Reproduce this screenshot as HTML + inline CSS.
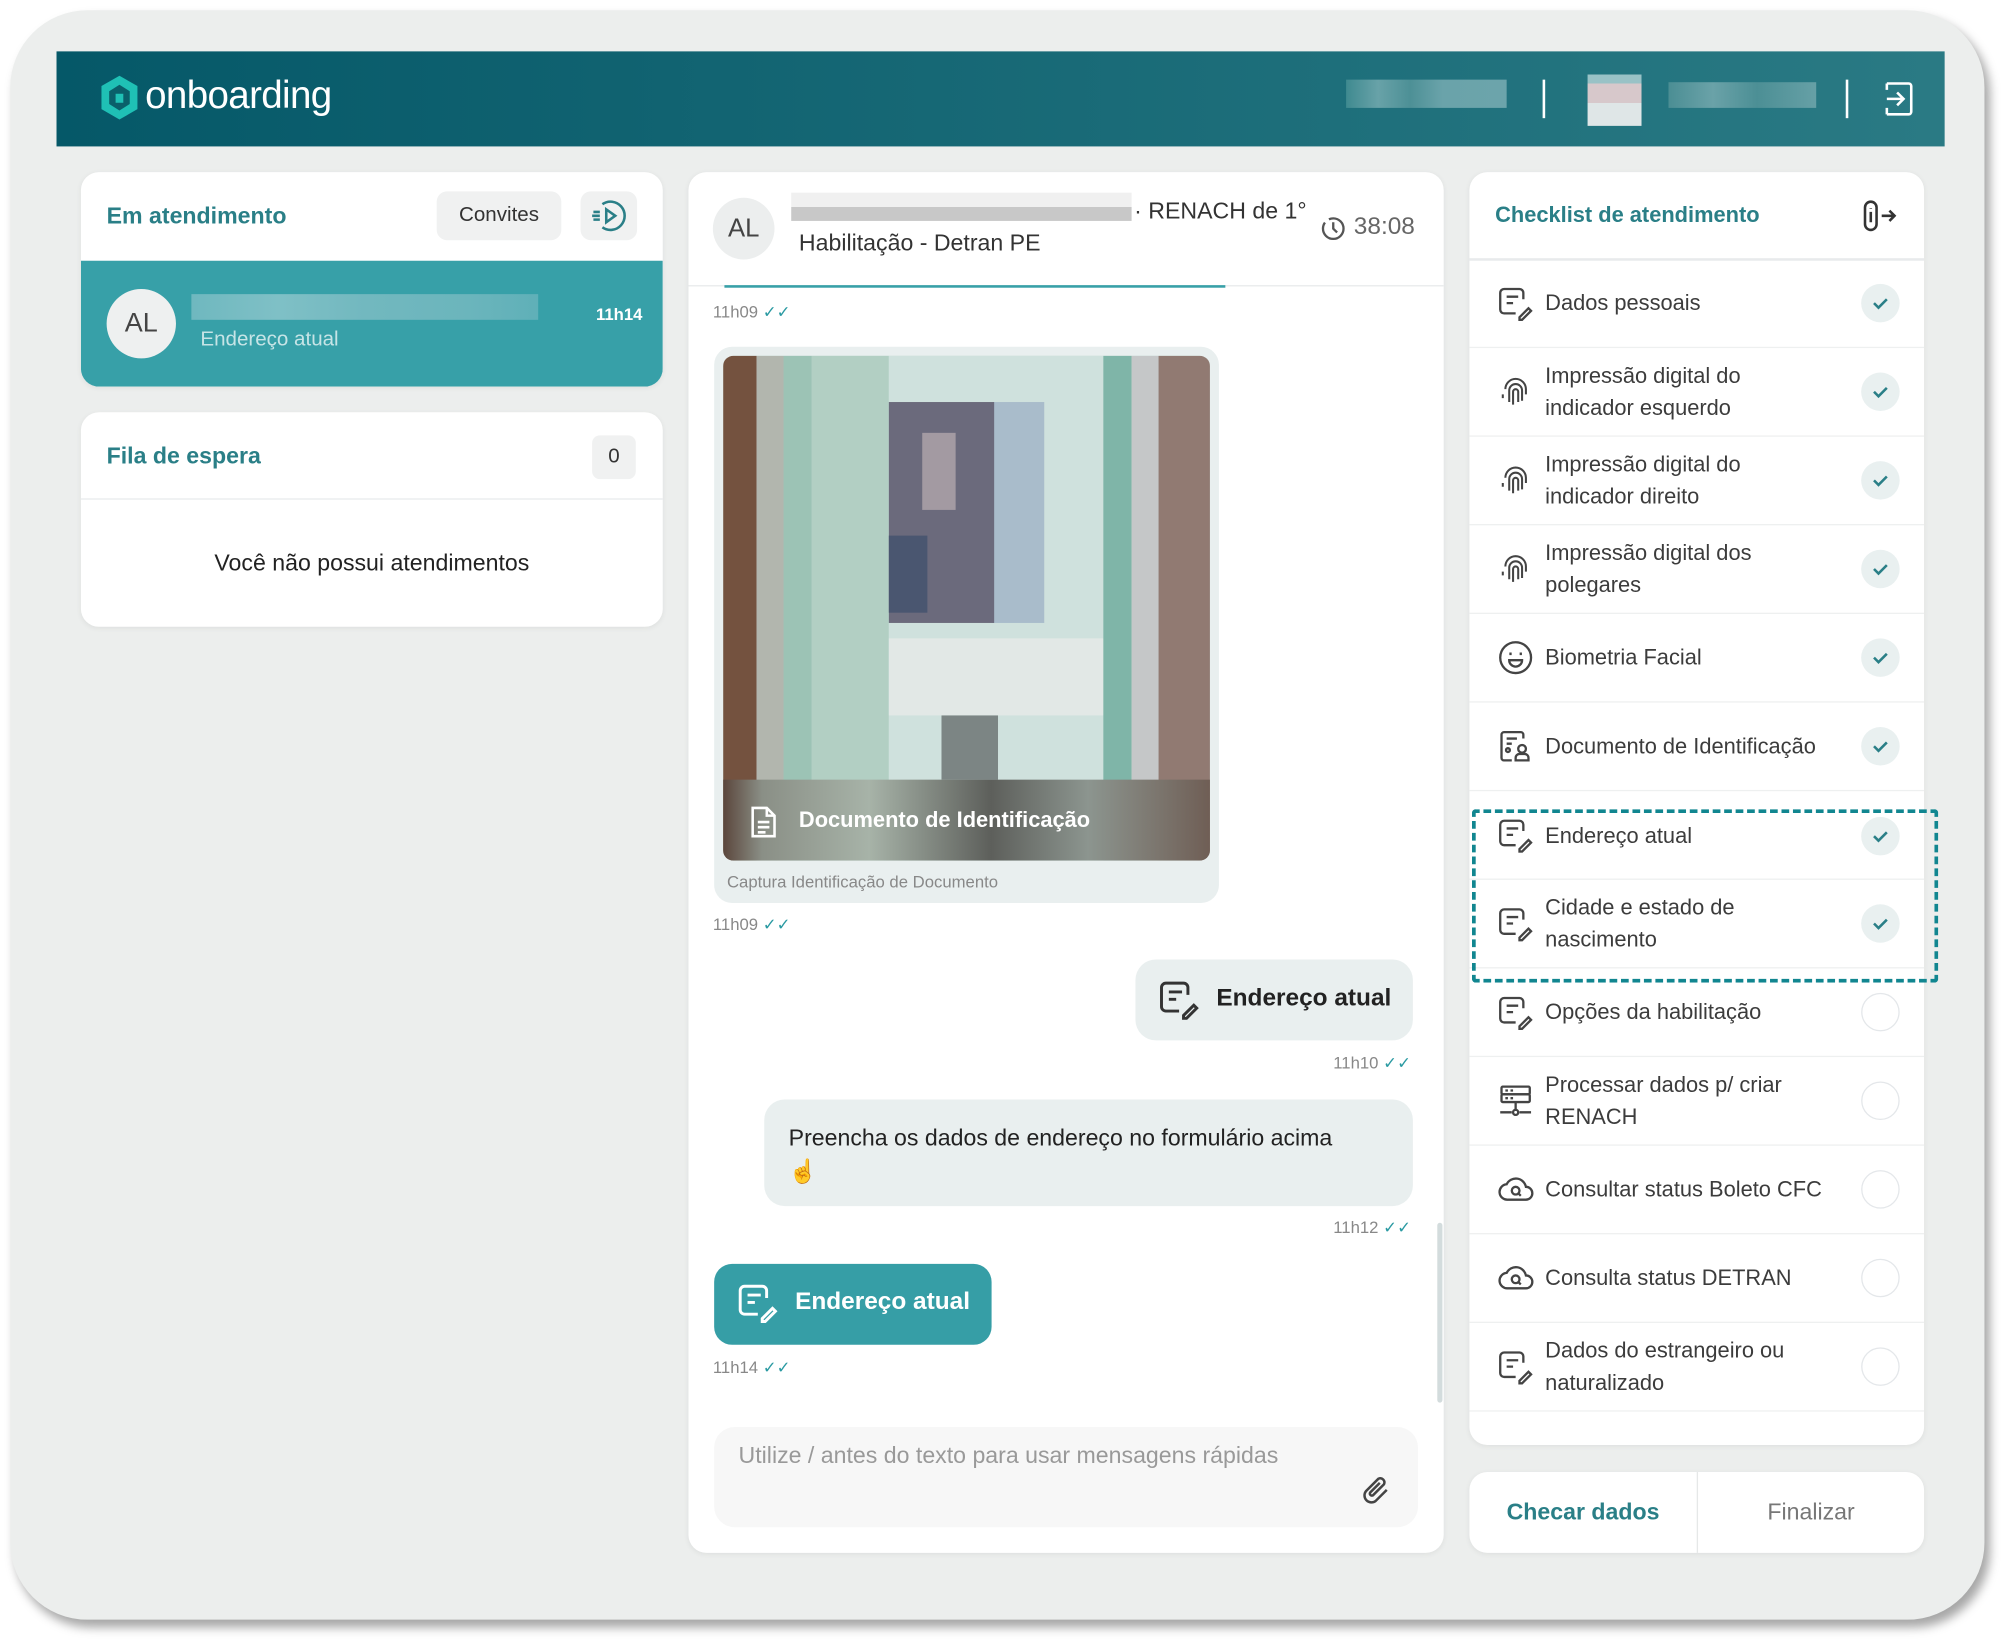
<!DOCTYPE html>
<html><head><meta charset="utf-8">
<style>
*{box-sizing:border-box;margin:0;padding:0}
html,body{width:2014px;height:1648px;overflow:hidden;background:#fff;font-family:"Liberation Sans",sans-serif}
#w{position:absolute;left:0;top:0;width:1568px;height:1283px;transform:scale(1.28444);transform-origin:0 0}
.a{position:absolute}
.frame{left:8px;top:8px;width:1537px;height:1253px;background:#eceeed;border-radius:60px;box-shadow:4px 6px 8px rgba(0,0,0,.35)}
.hdr{left:44px;top:40px;width:1470px;height:74px;background:linear-gradient(90deg,#055868,#2a7a84)}
.card{background:#fff;border-radius:14px;box-shadow:0 1px 4px rgba(0,0,0,.06)}
.t{color:#2a7f87;font-weight:bold;font-size:18px}
.sep{height:1px;background:#e8eaec}
.row{position:absolute;left:0;width:354px;height:69px;border-bottom:1px solid #eef0f0}
.row .ic{position:absolute;left:22px;top:50%;transform:translateY(-50%);width:28px;height:28px}
.row .tx{position:absolute;left:59px;top:50%;transform:translateY(-50%);font-size:17px;color:#3c3c3c;line-height:25px;width:205px}
.row .ck{position:absolute;left:305px;top:50%;transform:translateY(-50%);width:30px;height:30px;border-radius:50%;background:#e9f0f0}
.row .ck.o{background:#fff;border:1.5px solid #e4e7ea}
.time{font-size:13px;color:#888}
</style></head><body>
<div id="w">
<div class="a frame"></div>
<div class="a hdr"></div>
<svg class="a" style="left:77px;top:58px" width="32" height="36" viewBox="0 0 32 36"><path d="M16 1 L30 9 V27 L16 35 L2 27 V9Z" fill="#1fc0b5"/><path d="M16 8 L24 13 V23 L16 28 L8 23 V13Z" fill="#0a5f6a"/><rect x="13" y="15" width="6" height="7" fill="#1fc0b5"/></svg>
<div class="a" style="left:113px;top:58px;color:#fff;font-size:30px;letter-spacing:-0.5px">onboarding</div>
<div class="a" style="left:1048px;top:62px;width:125px;height:22px;background:linear-gradient(90deg,#3f8a90,#68a2a8 20%,#4d9096 40%,#6aa3aa 60%,#6ca4ab)"></div>
<div class="a" style="left:1201px;top:62px;width:2px;height:30px;background:#fff"></div>
<div class="a" style="left:1236px;top:58px;width:42px;height:40px;background:linear-gradient(180deg,#99c2c6 0 18%,#d7c8cb 18% 55%,#dfe6e7 55%)"></div>
<div class="a" style="left:1299px;top:64px;width:115px;height:20px;background:linear-gradient(90deg,#4b8e94,#6aa2a8 30%,#4c8f95 60%,#66a0a6)"></div>
<div class="a" style="left:1437px;top:62px;width:2px;height:30px;background:#fff"></div>
<svg class="a" style="left:1466px;top:63px" width="24" height="28" viewBox="0 0 24 28" fill="none" stroke="#fff" stroke-width="2"><path d="M3 2h17a2 2 0 0 1 2 2v20a2 2 0 0 1-2 2H3"/><path d="M3 14h12M11 9l5 5-5 5"/><path d="M3 2v5M3 21v5"/></svg>

<div class="a card" style="left:63px;top:134px;width:453px;height:167px;overflow:hidden">
  <div class="a t" style="left:20px;top:24px">Em atendimento</div>
  <div class="a" style="left:277px;top:15px;width:97px;height:38px;background:#f0f1f1;border-radius:8px;font-size:16px;color:#333;text-align:center;line-height:38px">Convites</div>
  <div class="a" style="left:389px;top:15px;width:44px;height:38px;background:#f0f1f1;border-radius:8px"></div>
  <svg class="a" style="left:396px;top:20px" width="30" height="28" viewBox="0 0 30 28" fill="none" stroke="#2a7f87" stroke-width="2"><path d="M10 5a11 11 0 1 1 0 18"/><path d="M13 9l7 5-7 5z"/><path d="M3 11h5M2 14h6M3 17h5"/></svg>
  <div class="a" style="left:0;top:69px;width:453px;height:98px;background:#37a0a8"></div>
  <div class="a" style="left:20px;top:91px;width:54px;height:54px;border-radius:50%;background:#eef0f0;color:#444;font-size:21px;text-align:center;line-height:54px">AL</div>
  <div class="a" style="left:86px;top:95px;width:270px;height:20px;background:linear-gradient(90deg,#6fb8bf,#7fc0c6 25%,#72b8bf 50%,#6bb5bc 80%,#5fb0b8)"></div>
  <div class="a" style="left:93px;top:122px;font-size:16px;color:#c6e4e6">Endereço atual</div>
  <div class="a" style="left:401px;top:103px;font-size:13px;color:#fff;font-weight:bold">11h14</div>
</div>
<div class="a card" style="left:63px;top:321px;width:453px;height:167px">
  <div class="a t" style="left:20px;top:24px">Fila de espera</div>
  <div class="a" style="left:398px;top:18px;width:34px;height:34px;background:#f0f1f1;border-radius:6px;text-align:center;line-height:34px;font-size:16px;color:#333">0</div>
  <div class="a sep" style="left:0;top:67px;width:453px"></div>
  <div class="a" style="left:0;top:107px;width:453px;text-align:center;font-size:18px;color:#222">Você não possui atendimentos</div>
</div>

<div class="a card" style="left:536px;top:134px;width:588px;height:1075px;overflow:hidden">
  <div class="a" style="left:19px;top:20px;width:48px;height:48px;border-radius:50%;background:#eceeee;color:#444;font-size:20px;text-align:center;line-height:48px">AL</div>
  <div class="a" style="left:80px;top:16px;width:265px;height:22px;background:linear-gradient(180deg,#f0f0f0 50%,#c8c8c8 50%)"></div>
  <div class="a" style="left:347px;top:20px;font-size:18px;color:#333">· RENACH de 1°</div>
  <div class="a" style="left:86px;top:45px;font-size:18px;color:#333">Habilitação - Detran PE</div>
  <svg class="a" style="left:492px;top:34px" width="20" height="20" viewBox="0 0 20 20" fill="none" stroke="#555" stroke-width="1.8"><circle cx="10" cy="10" r="8" stroke-dasharray="30 4"/><path d="M10 5v5l3 3"/></svg>
  <div class="a" style="left:518px;top:32px;font-size:19px;color:#666">38:08</div>
  <div class="a sep" style="left:0;top:88px;width:588px"></div>
  <div class="a" style="left:28px;top:88px;width:390px;height:2px;background:#38a0a8"></div>
  <div class="a time" style="left:19px;top:101px">11h09 <span style="color:#2a9aa2">✓✓</span></div>
  <div class="a" style="left:20px;top:136px;width:393px;height:433px;background:#e9efef;border-radius:14px"></div>
  <div class="a" style="left:27px;top:143px;width:379px;height:393px;border-radius:8px;overflow:hidden;background:#c8ddd5">
    <div class="a" style="left:0;top:0;width:26px;height:393px;background:#74523f"></div>
    <div class="a" style="left:26px;top:0;width:21px;height:393px;background:#b2b6ae"></div>
    <div class="a" style="left:47px;top:0;width:22px;height:393px;background:#9cc3b5"></div>
    <div class="a" style="left:69px;top:0;width:60px;height:393px;background:#b2cfc3"></div>
    <div class="a" style="left:129px;top:0;width:170px;height:393px;background:#cfe1dd"></div>
    <div class="a" style="left:129px;top:220px;width:170px;height:60px;background:#e2e8e6"></div>
    <div class="a" style="left:296px;top:0;width:22px;height:393px;background:#7fb5a8"></div>
    <div class="a" style="left:318px;top:0;width:21px;height:393px;background:#c5c7c8"></div>
    <div class="a" style="left:339px;top:0;width:40px;height:393px;background:#917a72"></div>
    <div class="a" style="left:210px;top:36px;width:40px;height:172px;background:#a9bccb"></div>
    <div class="a" style="left:129px;top:36px;width:82px;height:172px;background:#6b6a7c"></div>
    <div class="a" style="left:155px;top:60px;width:26px;height:60px;background:#a39aa2"></div>
    <div class="a" style="left:129px;top:140px;width:30px;height:60px;background:#4a5670"></div>
    <div class="a" style="left:170px;top:280px;width:44px;height:50px;background:#7c8584"></div>
    <div class="a" style="left:0;top:330px;width:379px;height:63px;background:linear-gradient(90deg,#5b463c,#8a8f86 8%,#a7b3a8 30%,#5d5f5b 55%,#8c958f 75%,#6f5e55)"></div>
    <svg class="a" style="left:20px;top:350px" width="24" height="26" viewBox="0 0 24 26" fill="none" stroke="#fff" stroke-width="2"><path d="M3 2h11l6 6v16H3z"/><path d="M14 2v6h6M7 13h9M7 17h9M7 21h6"/></svg>
    <div class="a" style="left:59px;top:352px;color:#fff;font-size:17px;font-weight:bold">Documento de Identificação</div>
  </div>
  <div class="a" style="left:30px;top:545px;font-size:13px;color:#888">Captura Identificação de Documento</div>
  <div class="a time" style="left:19px;top:578px">11h09 <span style="color:#2a9aa2">✓✓</span></div>
  <div class="a" style="left:348px;top:613px;width:216px;height:63px;background:#e9efef;border-radius:16px"></div>
  <svg class="a" style="left:366px;top:628px" width="32" height="32" viewBox="0 0 28 28" fill="none" stroke="#333" stroke-width="2"><path d="M14 22H5a3 3 0 0 1-3-3V6a3 3 0 0 1 3-3h12a3 3 0 0 1 3 3v5"/><path d="M7 9h9M7 14h5"/><path d="M17 25l7-7 2 2-7 7h-2z"/></svg>
  <div class="a" style="left:411px;top:633px;font-size:19px;color:#222;font-weight:bold">Endereço atual</div>
  <div class="a time" style="left:502px;top:686px">11h10 <span style="color:#2a9aa2">✓✓</span></div>
  <div class="a" style="left:59px;top:722px;width:505px;height:83px;background:#e9efef;border-radius:16px"></div>
  <div class="a" style="left:78px;top:739px;font-size:18px;color:#222;line-height:26px">Preencha os dados de endereço no formulário acima<br><span style="color:#e6a817">☝</span></div>
  <div class="a time" style="left:502px;top:814px">11h12 <span style="color:#2a9aa2">✓✓</span></div>
  <div class="a" style="left:20px;top:850px;width:216px;height:63px;background:#369ea6;border-radius:14px"></div>
  <svg class="a" style="left:38px;top:864px" width="32" height="32" viewBox="0 0 28 28" fill="none" stroke="#fff" stroke-width="2"><path d="M14 22H5a3 3 0 0 1-3-3V6a3 3 0 0 1 3-3h12a3 3 0 0 1 3 3v5"/><path d="M7 9h9M7 14h5"/><path d="M17 25l7-7 2 2-7 7h-2z"/></svg>
  <div class="a" style="left:83px;top:869px;font-size:19px;color:#fff;font-weight:bold">Endereço atual</div>
  <div class="a time" style="left:19px;top:923px">11h14 <span style="color:#2a9aa2">✓✓</span></div>
  <div class="a" style="left:583px;top:818px;width:4px;height:140px;background:#d3dcdd;border-radius:2px"></div>
  <div class="a" style="left:20px;top:977px;width:548px;height:78px;background:#f7f7f7;border-radius:16px"></div>
  <div class="a" style="left:39px;top:989px;font-size:18px;color:#999">Utilize / antes do texto para usar mensagens rápidas</div>
  <svg class="a" style="left:522px;top:1014px" width="26" height="26" viewBox="0 0 24 24" fill="none" stroke="#444" stroke-width="1.8"><path d="M20 11l-8 8a5 5 0 0 1-7-7l9-9a3 3 0 0 1 4 4l-8 8a1.5 1.5 0 0 1-2-2l7-7"/></svg>
</div>

<div class="a card" style="left:1144px;top:134px;width:354px;height:991px;overflow:hidden">
  <div class="a t" style="left:20px;top:24px;font-size:17px">Checklist de atendimento</div>
  <svg class="a" style="left:306px;top:21px" width="28" height="26" viewBox="0 0 28 26" fill="none" stroke="#333" stroke-width="2"><rect x="2" y="2" width="9" height="22" rx="4.5"/><path d="M6.5 10v8M6.5 7v.5"/><path d="M15 13h10M21 9l4 4-4 4"/></svg>
  <div class="a sep" style="left:0;top:67px;width:354px;height:2px"></div>

  <div class="row" style="top:68px"><svg class="ic" viewBox="0 0 28 28" fill="none" stroke="#444" stroke-width="1.8"><path d="M14 22H5a3 3 0 0 1-3-3V6a3 3 0 0 1 3-3h12a3 3 0 0 1 3 3v5"/><path d="M7 9h9M7 14h5"/><path d="M17 25l7-7 2 2-7 7h-2z"/></svg><div class="tx">Dados pessoais</div><div class="ck"><svg width="30" height="30" viewBox="0 0 30 30"><path d="M10 15l3.5 3.5L20 12" fill="none" stroke="#2a7f87" stroke-width="2"/></svg></div></div>
  <div class="row" style="top:137px"><svg class="ic" viewBox="0 0 28 28" fill="none" stroke="#444" stroke-width="1.6"><path d="M6 12a8 8 0 0 1 16 0v4M9 22v-9a5 5 0 0 1 10 0v8M12 24v-10a2 2 0 0 1 4 0v8M4 16v3"/></svg><div class="tx">Impressão digital do indicador esquerdo</div><div class="ck"><svg width="30" height="30" viewBox="0 0 30 30"><path d="M10 15l3.5 3.5L20 12" fill="none" stroke="#2a7f87" stroke-width="2"/></svg></div></div>
  <div class="row" style="top:206px"><svg class="ic" viewBox="0 0 28 28" fill="none" stroke="#444" stroke-width="1.6"><path d="M6 12a8 8 0 0 1 16 0v4M9 22v-9a5 5 0 0 1 10 0v8M12 24v-10a2 2 0 0 1 4 0v8M4 16v3"/></svg><div class="tx">Impressão digital do indicador direito</div><div class="ck"><svg width="30" height="30" viewBox="0 0 30 30"><path d="M10 15l3.5 3.5L20 12" fill="none" stroke="#2a7f87" stroke-width="2"/></svg></div></div>
  <div class="row" style="top:275px"><svg class="ic" viewBox="0 0 28 28" fill="none" stroke="#444" stroke-width="1.6"><path d="M6 12a8 8 0 0 1 16 0v4M9 22v-9a5 5 0 0 1 10 0v8M12 24v-10a2 2 0 0 1 4 0v8M4 16v3"/></svg><div class="tx">Impressão digital dos polegares</div><div class="ck"><svg width="30" height="30" viewBox="0 0 30 30"><path d="M10 15l3.5 3.5L20 12" fill="none" stroke="#2a7f87" stroke-width="2"/></svg></div></div>
  <div class="row" style="top:344px"><svg class="ic" viewBox="0 0 28 28" fill="none" stroke="#444" stroke-width="1.8"><circle cx="14" cy="14" r="12"/><path d="M10 10v2M18 10v2M9 16h10a5 5 0 0 1-10 0z"/></svg><div class="tx" style="width:240px">Biometria Facial</div><div class="ck"><svg width="30" height="30" viewBox="0 0 30 30"><path d="M10 15l3.5 3.5L20 12" fill="none" stroke="#2a7f87" stroke-width="2"/></svg></div></div>
  <div class="row" style="top:413px"><svg class="ic" viewBox="0 0 28 28" fill="none" stroke="#444" stroke-width="1.8"><path d="M20 8V5a2 2 0 0 0-2-2H5a2 2 0 0 0-2 2v18a2 2 0 0 0 2 2h6"/><path d="M7 8h8M7 12h4"/><circle cx="8" cy="17" r="1.5"/><circle cx="19" cy="16" r="3"/><path d="M14 25v-2a3 3 0 0 1 3-3h4a3 3 0 0 1 3 3v2z"/></svg><div class="tx" style="width:240px">Documento de Identificação</div><div class="ck"><svg width="30" height="30" viewBox="0 0 30 30"><path d="M10 15l3.5 3.5L20 12" fill="none" stroke="#2a7f87" stroke-width="2"/></svg></div></div>
  <div class="row" style="top:482px"><svg class="ic" style="top:34px" viewBox="0 0 28 28" fill="none" stroke="#444" stroke-width="1.8"><path d="M14 22H5a3 3 0 0 1-3-3V6a3 3 0 0 1 3-3h12a3 3 0 0 1 3 3v5"/><path d="M7 9h9M7 14h5"/><path d="M17 25l7-7 2 2-7 7h-2z"/></svg><div class="tx" style="top:35px">Endereço atual</div><div class="ck" style="top:35px"><svg width="30" height="30" viewBox="0 0 30 30"><path d="M10 15l3.5 3.5L20 12" fill="none" stroke="#2a7f87" stroke-width="2"/></svg></div></div>
  <div class="row" style="top:551px"><svg class="ic" viewBox="0 0 28 28" fill="none" stroke="#444" stroke-width="1.8"><path d="M14 22H5a3 3 0 0 1-3-3V6a3 3 0 0 1 3-3h12a3 3 0 0 1 3 3v5"/><path d="M7 9h9M7 14h5"/><path d="M17 25l7-7 2 2-7 7h-2z"/></svg><div class="tx">Cidade e estado de nascimento</div><div class="ck"><svg width="30" height="30" viewBox="0 0 30 30"><path d="M10 15l3.5 3.5L20 12" fill="none" stroke="#2a7f87" stroke-width="2"/></svg></div></div>
  <div class="row" style="top:620px"><svg class="ic" viewBox="0 0 28 28" fill="none" stroke="#444" stroke-width="1.8"><path d="M14 22H5a3 3 0 0 1-3-3V6a3 3 0 0 1 3-3h12a3 3 0 0 1 3 3v5"/><path d="M7 9h9M7 14h5"/><path d="M17 25l7-7 2 2-7 7h-2z"/></svg><div class="tx" style="width:240px">Opções da habilitação</div><div class="ck o"></div></div>
  <div class="row" style="top:689px"><svg class="ic" viewBox="0 0 28 28" fill="none" stroke="#444" stroke-width="1.8"><rect x="3" y="3" width="22" height="6" rx="1"/><rect x="3" y="9" width="22" height="6" rx="1"/><path d="M6 6h2M10 6h2M6 12h2M10 12h2M14 15v7M2 23h9M17 23h9"/><circle cx="14" cy="23" r="2"/></svg><div class="tx">Processar dados p/ criar RENACH</div><div class="ck o"></div></div>
  <div class="row" style="top:758px"><svg class="ic" viewBox="0 0 28 28" fill="none" stroke="#444" stroke-width="1.8"><path d="M8 22a6 6 0 0 1-1-12 8 8 0 0 1 15 2 5 5 0 0 1 0 10z"/><circle cx="14" cy="15" r="3"/><path d="M16 17l2 2"/></svg><div class="tx" style="width:240px">Consultar status Boleto CFC</div><div class="ck o"></div></div>
  <div class="row" style="top:827px"><svg class="ic" viewBox="0 0 28 28" fill="none" stroke="#444" stroke-width="1.8"><path d="M8 22a6 6 0 0 1-1-12 8 8 0 0 1 15 2 5 5 0 0 1 0 10z"/><circle cx="14" cy="15" r="3"/><path d="M16 17l2 2"/></svg><div class="tx" style="width:240px">Consulta status DETRAN</div><div class="ck o"></div></div>
  <div class="row" style="top:896px"><svg class="ic" viewBox="0 0 28 28" fill="none" stroke="#444" stroke-width="1.8"><path d="M14 22H5a3 3 0 0 1-3-3V6a3 3 0 0 1 3-3h12a3 3 0 0 1 3 3v5"/><path d="M7 9h9M7 14h5"/><path d="M17 25l7-7 2 2-7 7h-2z"/></svg><div class="tx">Dados do estrangeiro ou naturalizado</div><div class="ck o"></div></div>
</div>
<div class="a" style="left:1146px;top:630px;width:363px;height:135px;border:3px dashed #118690;border-radius:3px"></div>

<div class="a card" style="left:1144px;top:1146px;width:354px;height:63px">
  <div class="a" style="left:0;top:0;width:177px;height:63px;text-align:center;line-height:63px;color:#2a7f87;font-weight:bold;font-size:18px">Checar dados</div>
  <div class="a" style="left:177px;top:0;width:1px;height:63px;background:#e6e8e8"></div>
  <div class="a" style="left:178px;top:0;width:176px;height:63px;text-align:center;line-height:63px;color:#777;font-size:18px">Finalizar</div>
</div>
</div>
</body></html>
